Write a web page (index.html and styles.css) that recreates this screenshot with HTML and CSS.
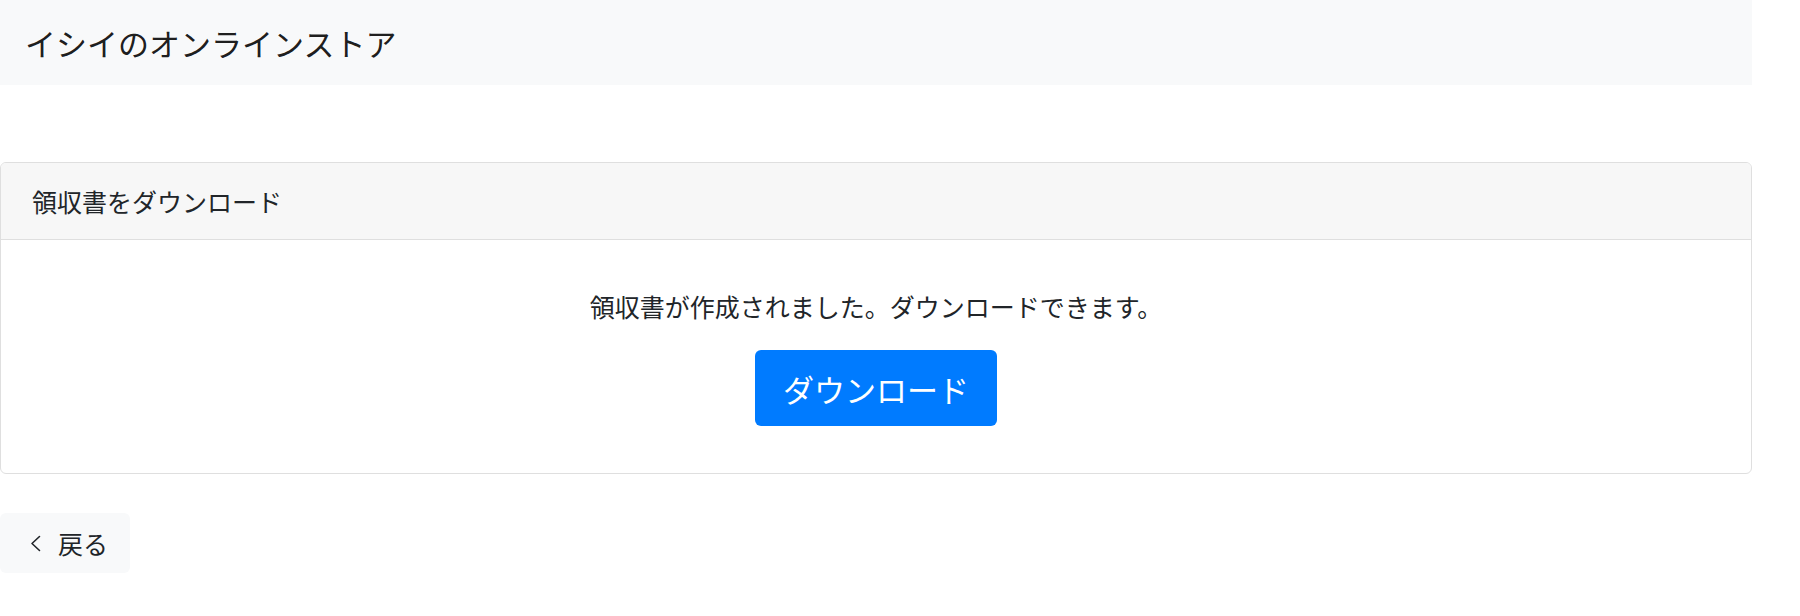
FILE: index.html
```html
<!DOCTYPE html>
<html lang="ja">
<head>
<meta charset="utf-8">
<title>領収書をダウンロード</title>
<link rel="stylesheet" href="styles.css">
</head>
<body>
<div class="page">
  <nav class="navbar">
    <span class="brand">イシイのオンラインストア</span>
  </nav>
  <div class="card">
    <div class="card-header">領収書をダウンロード</div>
    <div class="card-body">
      <p class="message">領収書が作成されました。ダウンロードできます。</p>
      <a class="btn-primary" href="#">ダウンロード</a>
    </div>
  </div>
  <a class="btn-back" href="#">
    <svg class="chev" width="14" height="17" viewBox="0 0 14 17"><polyline points="10.5,1.5 3,8.5 10.5,15.5" fill="none" stroke="#212529" stroke-width="1.6" stroke-linecap="round" stroke-linejoin="round"/></svg>
    <span>戻る</span>
  </a>
</div>
</body>
</html>
```
FILE: styles.css
```css
html, body {
  margin: 0;
  padding: 0;
  background: #fff;
}
body {
  font-family: "Noto Sans CJK JP", "Noto Sans", sans-serif;
  color: #212529;
}
.page {
  width: 1752px;
  display: flex;
  flex-direction: column;
  align-items: flex-start;
}
.navbar {
  align-self: stretch;
  height: 85px;
  background: #f8f9fa;
  display: flex;
  align-items: center;
  padding: 0 25px;
}
.brand {
  font-size: 31px;
  line-height: 40px;
  color: rgba(0,0,0,.9);
}
.card {
  align-self: stretch;
  margin-top: 77px;
  border: 1px solid #dfdfdf;
  border-radius: 6px;
  overflow: hidden;
}
.card-header {
  height: 77px;
  box-sizing: border-box;
  background: #f7f7f7;
  border-bottom: 1px solid #dfdfdf;
  padding: 0 31px;
  display: flex;
  align-items: center;
  font-size: 25px;
  line-height: 37px;
}
.card-body {
  padding: 48px 31px 47px;
  display: flex;
  flex-direction: column;
  align-items: center;
}
.message {
  margin: 0 0 25px;
  font-size: 25px;
  line-height: 37px;
}
.btn-primary {
  display: flex;
  align-items: center;
  justify-content: center;
  width: 242px;
  height: 76px;
  box-sizing: border-box;
  background: #007bff;
  color: #fff;
  border-radius: 6px;
  font-size: 31px;
  text-decoration: none;
}
.btn-back {
  margin-top: 39px;
  display: flex;
  align-items: center;
  gap: 15px;
  height: 60px;
  box-sizing: border-box;
  padding: 0 22px 0 29px;
  background: #f8f9fa;
  border-radius: 6px;
  color: #212529;
  font-size: 25px;
  line-height: 37px;
  text-decoration: none;
}
.chev {
  display: block;
}
```
